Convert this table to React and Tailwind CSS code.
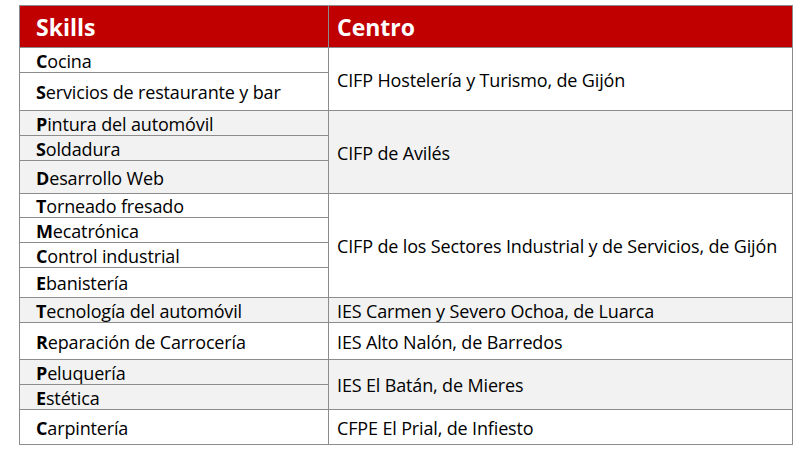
import React from "react";

const groups = [
  {
    centro: "CIFP Hostelería y Turismo, de Gijón",
    gray: false,
    skills: [
      ["Cocina", 24],
      ["Servicios de restaurante y bar", 37],
    ],
  },
  {
    centro: "CIFP de Avilés",
    gray: true,
    skills: [
      ["Pintura del automóvil", 24],
      ["Soldadura", 24],
      ["Desarrollo Web", 32],
    ],
  },
  {
    centro: "CIFP de los Sectores Industrial y de Servicios, de Gijón",
    gray: false,
    skills: [
      ["Torneado fresado", 23],
      ["Mecatrónica", 24],
      ["Control industrial", 24],
      ["Ebanistería", 29],
    ],
  },
  {
    centro: "IES Carmen y Severo Ochoa, de Luarca",
    gray: true,
    skills: [["Tecnología del automóvil", 24]],
  },
  {
    centro: "IES Alto Nalón, de Barredos",
    gray: false,
    skills: [["Reparación de Carrocería", 36]],
  },
  {
    centro: "IES El Batán, de Mieres",
    gray: true,
    skills: [
      ["Peluquería", 24],
      ["Estética", 24],
    ],
  },
  {
    centro: "CFPE El Prial, de Infiesto",
    gray: false,
    skills: [["Carpintería", 34]],
  },
];

const Skill = ({ name, h, gray }) => (
  <div
    className={`flex items-center pl-[16px] pt-px ${gray ? "bg-[#f2f2f2]" : "bg-white"}`}
    style={{ height: h }}
  >
    <span className="font-bold">{name[0]}</span>
    <span>{name.slice(1)}</span>
  </div>
);

export default function App() {
  return (
    <div
      className="w-[812px] h-[450px] bg-white pt-[5px] pl-[19px] text-black text-[18px] leading-[22px] tracking-[-0.15px]"
      style={{ fontFamily: '"Open Sans", "Liberation Sans", sans-serif' }}
    >
      <div className="w-[774px] bg-[#8c8c8c] p-px flex flex-col gap-px">
        <div className="grid grid-cols-[308px_463px] gap-px h-[41px] bg-[#8c8c8c] text-white font-bold text-[23px] tracking-normal">
          <div className="flex items-center pl-[16px] bg-[#c00000]">Skills</div>
          <div className="flex items-center pl-[8px] bg-[#c00000]">Centro</div>
        </div>
        {groups.map((g) => (
          <div key={g.centro} className="grid grid-cols-[308px_463px] gap-px">
            <div className="flex flex-col gap-px">
              {g.skills.map(([name, h]) => (
                <Skill key={name} name={name} h={h} gray={g.gray} />
              ))}
            </div>
            <div
              className={`flex items-center pl-[8px] pt-px ${g.gray ? "bg-[#f2f2f2]" : "bg-white"}`}
            >
              {g.centro}
            </div>
          </div>
        ))}
      </div>
    </div>
  );
}
